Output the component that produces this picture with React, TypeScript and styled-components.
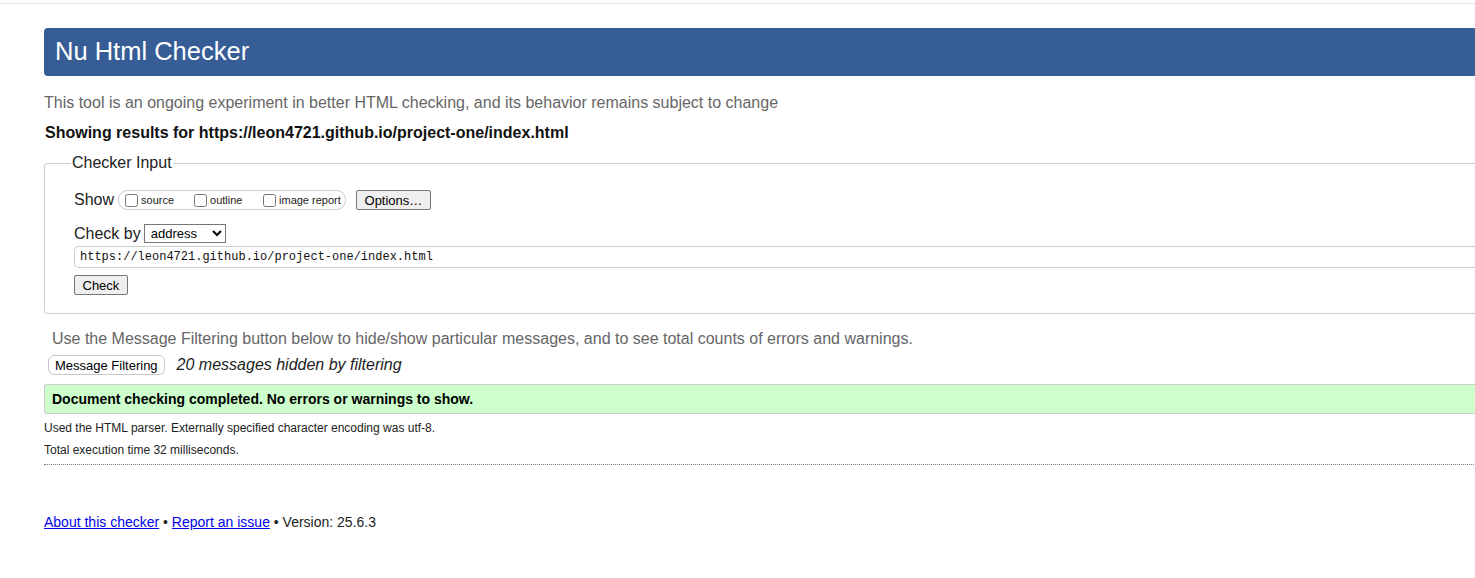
import React from "react";
import styled, { createGlobalStyle } from "styled-components";

const Global = createGlobalStyle`
  html, body { margin: 0; padding: 0; background: #fff; overflow: hidden; }
  body { font-family: "Liberation Sans", Arial, sans-serif; color: #111; }
`;

const TopRule = styled.div`
  height: 3px;
  border-bottom: 1px solid #e2e2e2;
`;

const Main = styled.main`
  margin: 24px 0 0 44px;
  width: 1480px;
`;

const Banner = styled.h1`
  margin: 0;
  height: 48px;
  line-height: 46px;
  padding-left: 11px;
  background: #365d95;
  color: #fff;
  font-size: 25.5px;
  font-weight: normal;
  border-radius: 4px 0 0 4px;
`;

const Intro = styled.p`
  margin: 17px 0 0;
  line-height: 20px;
  font-size: 16px;
  color: #666;
`;

const Results = styled.p`
  margin: 10px 0 0 1px;
  line-height: 20px;
  font-size: 16px;
  font-weight: bold;
  color: #111;
`;

const Fieldset = styled.fieldset`
  margin: 11px 0 0;
  padding: 6px 0 18px 29px;
  border: 1px solid #ccc;
  border-right: none;
  border-radius: 4px 0 0 4px;
  min-width: 0;
`;

const Legend = styled.legend`
  font-size: 16px;
  padding: 0 1px;
  margin-left: -3px;
  color: #222;
  line-height: 18px;
`;

const Row = styled.div<{ $mt?: number }>`
  display: flex;
  align-items: center;
  margin-top: ${(p) => p.$mt ?? 0}px;
`;

const Label = styled.span`
  font-size: 16px;
  color: #222;
`;

const Group = styled.span`
  display: inline-flex;
  align-items: center;
  margin-left: 4px;
  height: 18px;
  width: 226px;
  border: 1px solid #ccc;
  border-radius: 9px;
  box-sizing: content-box;
`;

const Opt = styled.label<{ $w: number; $pl?: number }>`
  display: inline-flex;
  align-items: center;
  width: ${(p) => p.$w}px;
  padding-left: ${(p) => p.$pl ?? 0}px;
  font-size: 11px;
  color: #222;
  input {
    margin: 0 3px 0 0;
    width: 13px;
    height: 13px;
  }
`;

const Btn = styled.button<{ $round?: boolean; $ml?: number }>`
  font-family: "Liberation Sans", Arial, sans-serif;
  font-size: 13px;
  height: 20px;
  padding: 0 ${(p) => (p.$round ? 6 : 7.5)}px;
  margin-left: ${(p) => p.$ml ?? 0}px;
  color: #000;
  background: ${(p) => (p.$round ? "#fff" : "#efefef")};
  border: 1px solid ${(p) => (p.$round ? "#c8c8c8" : "#767676")};
  border-radius: ${(p) => (p.$round ? "6px" : "2px")};
`;

const Select = styled.select`
  margin-left: 3px;
  height: 19px;
  width: 82px;
  font-family: "Liberation Sans", Arial, sans-serif;
  font-size: 13px;
  border: 1px solid #767676;
  border-radius: 0;
  padding: 0 0 0 2px;
  background: #fff;
  color: #000;
`;

const Url = styled.input`
  display: block;
  margin-top: 3px;
  width: 100%;
  height: 22px;
  box-sizing: border-box;
  font-family: "Liberation Mono", "Courier New", monospace;
  font-size: 12px;
  padding: 0 5px;
  border: 1px solid #ccc;
  border-right: none;
  border-radius: 5px 0 0 5px;
  color: #111;
  outline: none;
`;

const Hint = styled.p`
  margin: 15px 0 0 8px;
  font-size: 16px;
  line-height: 20px;
  color: #666;
`;

const Hidden = styled.em`
  margin-left: 12px;
  font-size: 16px;
  color: #222;
`;

const Success = styled.div`
  margin-top: 9px;
  height: 28px;
  line-height: 28px;
  padding-left: 7px;
  background: #ccffcc;
  border: 1px solid #ccc;
  border-right: none;
  border-radius: 3px 0 0 3px;
  font-size: 14px;
  font-weight: bold;
  color: #000;
`;

const Detail = styled.p<{ $mt: number }>`
  margin: ${(p) => p.$mt}px 0 0;
  font-size: 12px;
  line-height: 14px;
  color: #222;
`;

const Dotted = styled.hr`
  margin: 7px 0 0;
  border: none;
  border-top: 1px dotted #777;
`;

const Footer = styled.p`
  margin: 49px 0 0;
  font-size: 14px;
  line-height: 16px;
  color: #222;
  a { color: #00e; text-decoration: underline; }
`;

export default function App() {
  const url = "https://leon4721.github.io/project-one/index.html";
  return (
    <>
      <Global />
      <TopRule />
      <Main>
        <Banner>Nu Html Checker</Banner>
        <Intro>
          This tool is an ongoing experiment in better HTML checking, and its behavior remains subject to change
        </Intro>
        <Results>Showing results for {url}</Results>
        <Fieldset>
          <Legend>Checker Input</Legend>
          <Row $mt={12}>
            <Label>Show</Label>
            <Group>
              <Opt $w={69} $pl={6}>
                <input type="checkbox" />source
              </Opt>
              <Opt $w={69}>
                <input type="checkbox" />outline
              </Opt>
              <Opt $w={80}>
                <input type="checkbox" />image report
              </Opt>
            </Group>
            <Btn $ml={10}>Options…</Btn>
          </Row>
          <Row $mt={14}>
            <Label>Check by</Label>
            <Select defaultValue="address">
              <option value="address">address</option>
              <option value="file">file upload</option>
              <option value="text">text input</option>
            </Select>
          </Row>
          <Url readOnly value={url} />
          <Row $mt={7}>
            <Btn>Check</Btn>
          </Row>
        </Fieldset>
        <Hint>
          Use the Message Filtering button below to hide/show particular messages, and to see total counts of errors and warnings.
        </Hint>
        <Row $mt={6} style={{ marginLeft: 4 }}>
          <Btn $round>Message Filtering</Btn>
          <Hidden>20 messages hidden by filtering</Hidden>
        </Row>
        <Success>Document checking completed. No errors or warnings to show.</Success>
        <Detail $mt={7}>Used the HTML parser. Externally specified character encoding was utf-8.</Detail>
        <Detail $mt={8}>Total execution time 32 milliseconds.</Detail>
        <Dotted />
        <Footer>
          <a href="#about">About this checker</a> • <a href="#issue">Report an issue</a> • Version: 25.6.3
        </Footer>
      </Main>
    </>
  );
}
